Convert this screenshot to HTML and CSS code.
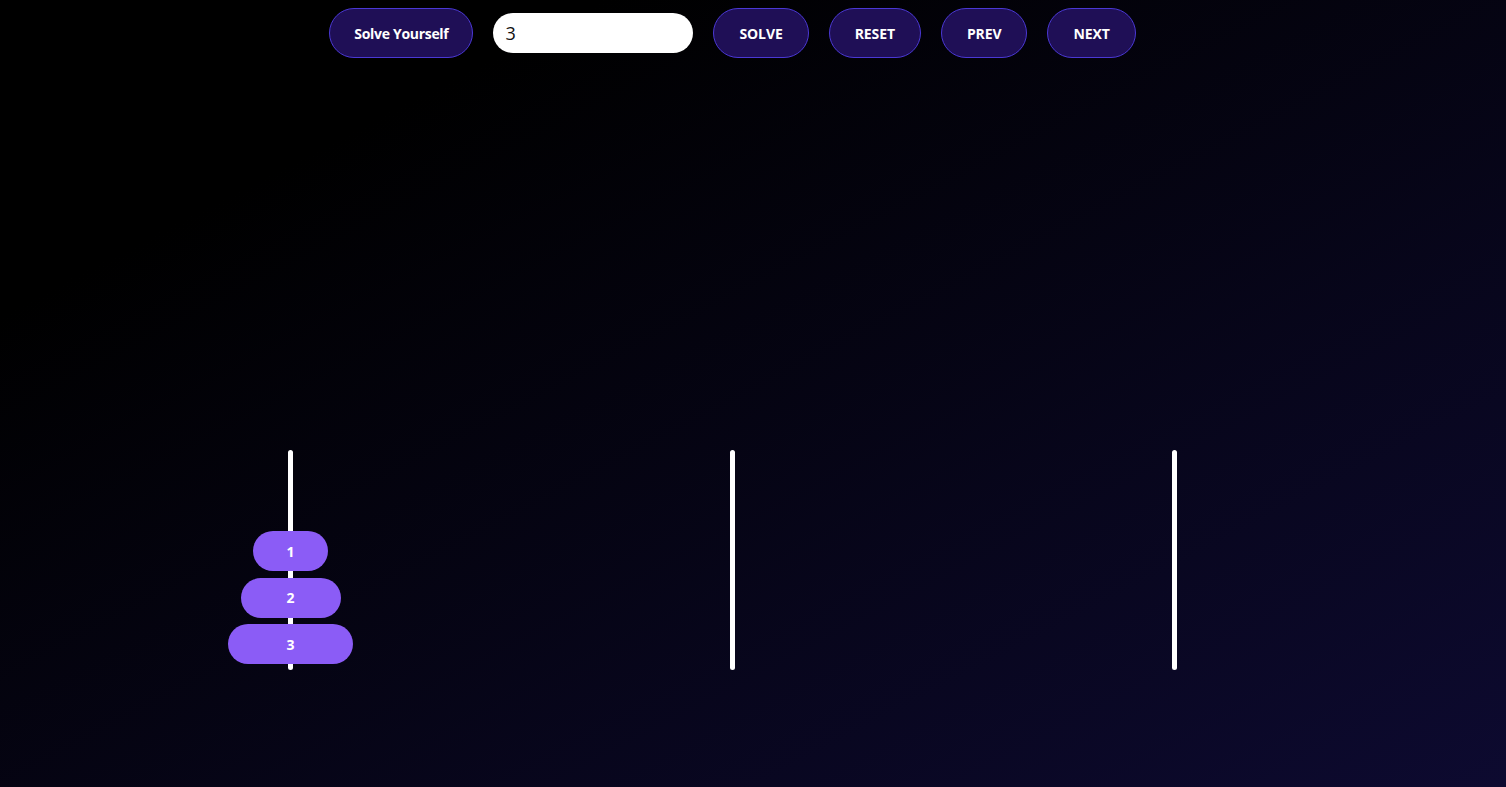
FILE: index.html
```html
<!DOCTYPE html>
<html lang="en">
<head>
<meta charset="utf-8">
<title>Tower of Hanoi</title>
<link rel="stylesheet" href="styles.css">
</head>
<body>
<div class="app">
  <div class="toolbar">
    <button class="btn btn-wide">Solve Yourself</button>
    <input class="count" type="text" value="3">
    <button class="btn">SOLVE</button>
    <button class="btn">RESET</button>
    <button class="btn">PREV</button>
    <button class="btn">NEXT</button>
  </div>
  <div class="towers">
    <div class="tower">
      <div class="rod"></div>
      <div class="stack">
        <div class="disk" style="width:125px">3</div>
        <div class="disk" style="width:100px">2</div>
        <div class="disk" style="width:75px">1</div>
      </div>
    </div>
    <div class="tower">
      <div class="rod"></div>
      <div class="stack"></div>
    </div>
    <div class="tower">
      <div class="rod"></div>
      <div class="stack"></div>
    </div>
  </div>
</div>
</body>
</html>
```
FILE: styles.css
```css
* { box-sizing: border-box; }
html, body {
  margin: 0;
  height: 100%;
}
body {
  background: linear-gradient(to bottom right, #000000 20%, #0d0a30 100%);
  font-family: "Open Sans", "Noto Sans", sans-serif;
  overflow: hidden;
}
.app {
  width: 1465px;
  height: 100%;
}
.toolbar {
  display: flex;
  justify-content: center;
  align-items: center;
  gap: 20px;
  padding-top: 8px;
  height: 58px;
}
.btn {
  height: 50px;
  padding: 0 25px;
  border-radius: 25px;
  border: 1px solid #4a38d4;
  background: #1f0f56;
  color: #ffffff;
  font-family: "Open Sans", sans-serif;
  font-weight: 700;
  font-size: 14px;
  letter-spacing: -0.1px;
  cursor: pointer;
}
.btn-wide { padding: 0 24px; letter-spacing: -0.3px; }
.count {
  width: 200px;
  height: 40px;
  border: none;
  border-radius: 20px;
  background: #ffffff;
  padding: 0 12px;
  font-family: "Open Sans", sans-serif;
  font-size: 18px;
  color: #111;
  outline: none;
}
.towers {
  display: flex;
  justify-content: center;
  margin-top: 392px;
}
.tower {
  width: 442px;
  height: 220px;
  position: relative;
  display: flex;
  justify-content: center;
}
.rod {
  width: 5px;
  height: 220px;
  background: #ffffff;
  border-radius: 3px;
}
.stack {
  position: absolute;
  left: 0;
  right: 0;
  bottom: 6px;
  display: flex;
  flex-direction: column-reverse;
  align-items: center;
  gap: 6.5px;
}
.disk {
  height: 40px;
  border-radius: 20px;
  background: #8b5cf6;
  color: #ffffff;
  font-weight: 700;
  font-size: 14px;
  display: flex;
  align-items: center;
  justify-content: center;
}
```
